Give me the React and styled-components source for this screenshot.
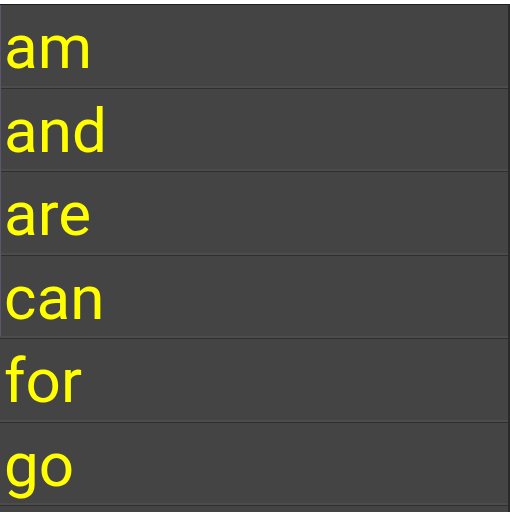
import React from "react";
import styled, { createGlobalStyle } from "styled-components";

const Global = createGlobalStyle`
  html, body { margin:0; padding:0; background:#fff; }
  body { font-family: Roboto, "Noto Sans", sans-serif; }
`;

const words = ["am", "and", "are", "can", "for", "go"];

const Page = styled.div`
  padding-top:4px;
  width:510px;
  height:512px;
  box-sizing:border-box;
  overflow:hidden;
`;

const List = styled.ul`
  position:relative;
  margin:0;
  padding:0;
  list-style:none;
  background:#444444;
  border-top:1px solid #1e1e1e;
  border-right:2px solid #2a2a2a;
`;

const LeftEdge = styled.span`
  position:absolute;
  left:0;
  top:0;
  width:1px;
  height:331px;
  background:#5a5670;
`;

const Row = styled.li`
  height:83.5px;
  display:flex;
  align-items:center;
  padding-left:4px;
  padding-top:2px;
  border-bottom:1px solid #2f2f2f;
  box-shadow: inset 0 -2px 0 #4c4c4c;
  color:#ffff00;
  font-size:62px;
  line-height:1;
  box-sizing:border-box;
`;

const Filler = styled.li`
  height:20px;
`;

const App = () => {
  return (
    <Page>
      <Global />
      <List>
        <LeftEdge />
        {words.map((w) => (
          <Row key={w}>{w}</Row>
        ))}
        <Filler />
      </List>
    </Page>
  );
};

export default App;
